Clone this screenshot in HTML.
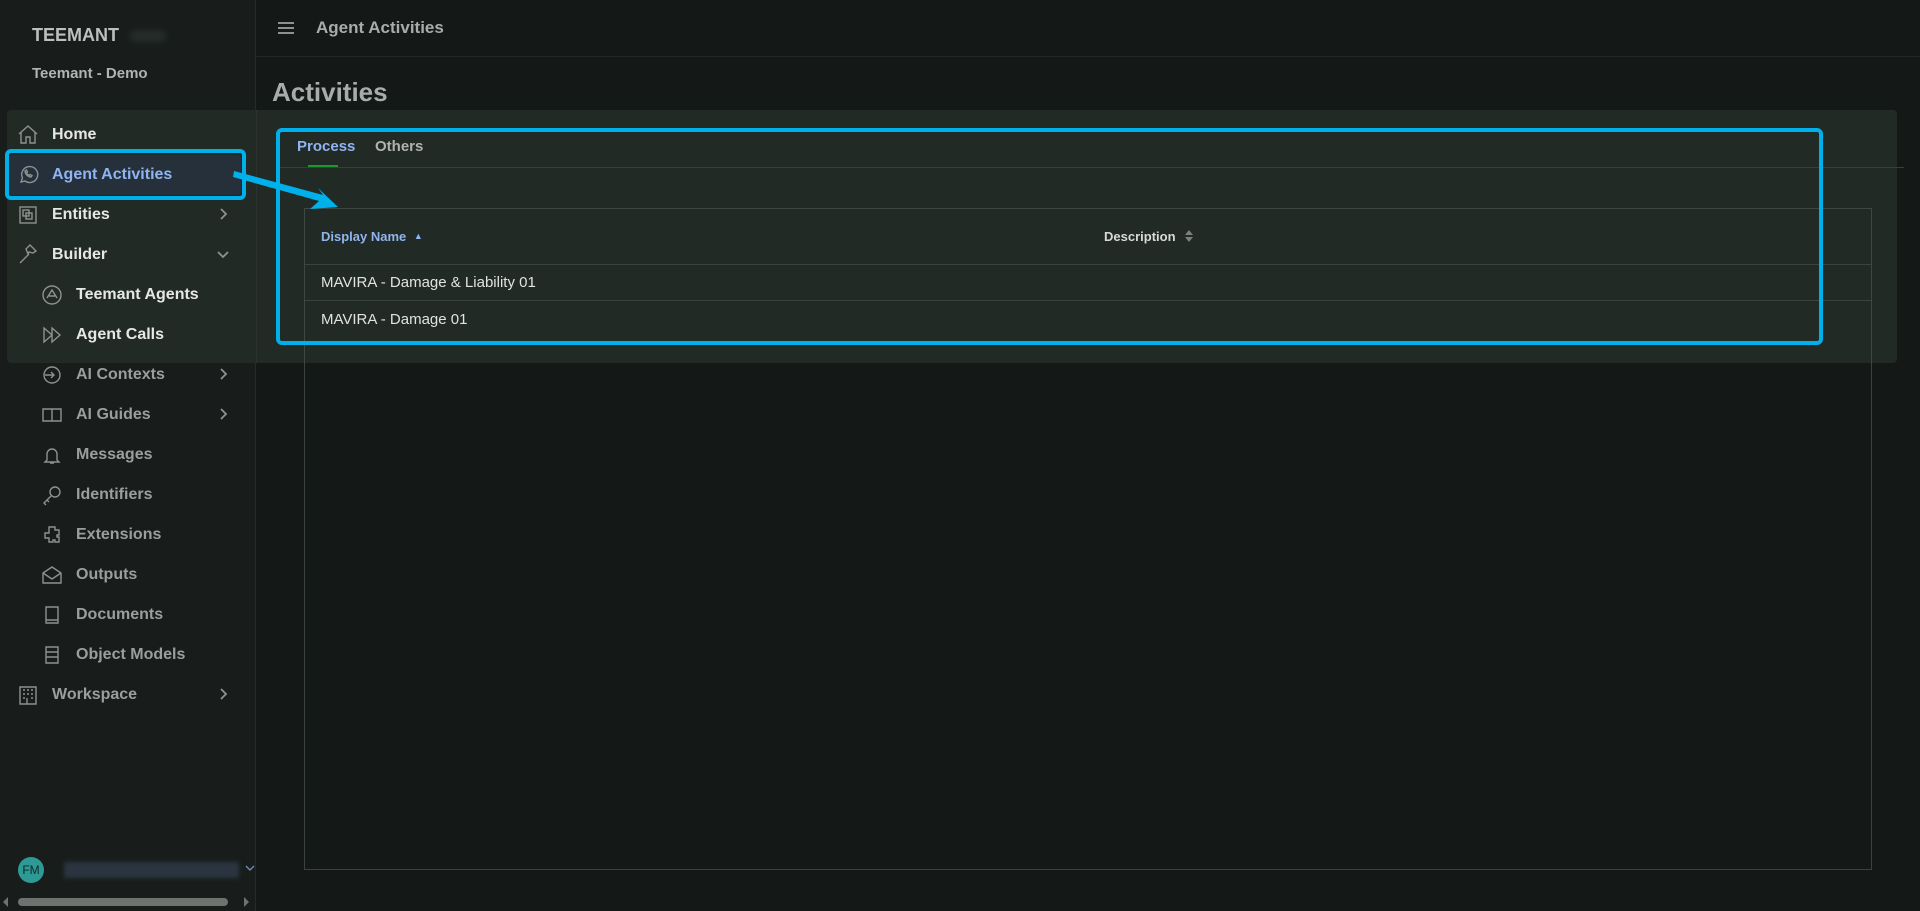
<!DOCTYPE html>
<html><head><meta charset="utf-8"><style>
*{box-sizing:border-box;margin:0;padding:0}
body{width:1920px;height:911px;overflow:hidden;background:#141917;font-family:"Liberation Sans",sans-serif;position:relative;color:#c9ccca}
.sb{position:absolute;left:0;top:0;width:256px;height:911px;background:#181d1b;border-right:1px solid #252b28}
.abs{position:absolute}
.nav{position:absolute;font-size:16px;font-weight:bold;color:#9a9e9c}
.hl{color:#e6e8e7}
svg{position:absolute;fill:none;stroke:#8d9290;stroke-width:1.4}
svg.ch{left:217px;stroke-width:1.8}
</style></head><body>
<div class="sb"></div>
<div class="abs" style="left:256px;top:56px;width:1664px;height:1px;background:#232926"></div>
<div class="abs" style="left:32px;top:25px;font-size:18px;font-weight:bold;color:#bcc0be">TEEMANT</div>
<div class="abs" style="left:130px;top:30px;width:36px;height:12px;background:#262c29;border-radius:6px;filter:blur(3px)"></div>
<div class="abs" style="left:32px;top:65px;font-size:15px;font-weight:bold;color:#b0b4b2">Teemant - Demo</div>
<div class="abs" style="left:278px;top:22px;width:16px;height:2px;background:#8d9290;box-shadow:0 5px 0 #8d9290,0 10px 0 #8d9290"></div>
<div class="abs" style="left:316px;top:18px;font-size:17px;font-weight:bold;color:#a8acaa">Agent Activities</div>
<div class="abs" style="left:272px;top:77px;font-size:26px;font-weight:bold;color:#a8acaa">Activities</div>

<div class="abs" style="left:304px;top:208px;width:1568px;height:662px;border:1px solid #3a423f"></div>

<div class="abs" style="left:7px;top:110px;width:1890px;height:253px;background:#222a25;border-radius:4px"></div>
<div class="abs" style="left:256px;top:110px;width:1px;height:253px;background:#2c3330"></div>
<div class="abs" style="left:276px;top:167px;width:1628px;height:1px;background:#364039"></div>
<div class="abs" style="left:304px;top:208px;width:1568px;height:156px;border:1px solid #3e4744;border-bottom:none"></div>
<div class="abs" style="left:305px;top:264px;width:1566px;height:1px;background:#3a4340"></div>
<div class="abs" style="left:305px;top:300px;width:1566px;height:1px;background:#3a4340"></div>
<div class="abs" style="left:297px;top:138px;font-size:15px;font-weight:bold;color:#8fb4f0">Process</div>
<div class="abs" style="left:308px;top:165px;width:30px;height:2px;background:#1a9a2a"></div>
<div class="abs" style="left:375px;top:138px;font-size:15px;font-weight:bold;color:#aeb2b0">Others</div>
<div class="abs" style="left:321px;top:229px;font-size:13px;font-weight:bold;color:#8fb4f0">Display Name <span style="font-size:9px;position:relative;top:-2px;margin-left:4px">▲</span></div>
<div class="abs" style="left:1104px;top:229px;font-size:13px;font-weight:bold;color:#d6dad8">Description</div>
<svg style="left:1185px;top:230px;stroke:none;fill:#7a807d" width="8" height="12" viewBox="0 0 8 12"><path d="M0 5L4 0 8 5zM0 7h8l-4 5z"/></svg>
<div class="abs" style="left:321px;top:274px;font-size:15px;color:#e0e3e1">MAVIRA - Damage &amp; Liability 01</div>
<div class="abs" style="left:321px;top:311px;font-size:15px;color:#e0e3e1">MAVIRA - Damage 01</div>
<div class="abs" style="left:276px;top:128px;width:1547px;height:217px;border:4px solid #00b0ea;border-radius:6px"></div>

<div class="abs" style="left:9px;top:155px;width:232px;height:40px;background:#25303a;border-radius:4px"></div>
<div class="abs" style="left:5px;top:149px;width:241px;height:51px;border:4px solid #00b0ea;border-radius:6px"></div>
<svg style="left:17px;top:123px" width="22" height="22" viewBox="0 0 22 22"><path d="M2 11L11 3l9 8M4 9v11h5v-6h4v6h5V9"/></svg>
<div class="nav hl" style="left:52px;top:126px">Home</div>
<svg style="left:17px;top:163px" width="22" height="22" viewBox="0 0 22 22"><path d="M4 19l1.5-4A8 8 0 1 1 8 18z M8 8c0 3 3 6 6 6l1-1.5-2-1-1 1c-1-.5-2-1.5-2.5-2.5l1-1-1-2z"/></svg>
<div class="nav" style="left:52px;top:166px;color:#8fb4f0">Agent Activities</div>
<svg style="left:17px;top:204px" width="22" height="22" viewBox="0 0 22 22"><rect x="3" y="3" width="16" height="16"/><rect x="6" y="6" width="6" height="6"/><rect x="9" y="9" width="6" height="6"/></svg>
<div class="nav hl" style="left:52px;top:206px">Entities</div>
<svg class="ch" style="top:208px" width="12" height="12" viewBox="0 0 12 12"><path d="M4 1l5 5-5 5"/></svg>
<svg style="left:17px;top:243px" width="22" height="22" viewBox="0 0 22 22"><path d="M3 20l9-9M9 6l4-4 6 6-3 2-4-1-1 2z"/></svg>
<div class="nav hl" style="left:52px;top:246px">Builder</div>
<svg class="ch" style="top:248px" width="12" height="12" viewBox="0 0 12 12"><path d="M1 4l5 5 5-5"/></svg>
<svg style="left:41px;top:284px" width="22" height="22" viewBox="0 0 22 22"><circle cx="11" cy="11" r="9"/><path d="M6 14l5-8 5 8M8 12h6"/></svg>
<div class="nav hl" style="left:76px;top:286px">Teemant Agents</div>
<svg style="left:41px;top:324px" width="22" height="22" viewBox="0 0 22 22"><path d="M3 4v14l8-7zM11 4v14l8-7z"/></svg>
<div class="nav hl" style="left:76px;top:326px">Agent Calls</div>
<svg style="left:41px;top:364px" width="22" height="22" viewBox="0 0 22 22"><circle cx="11" cy="11" r="8"/><path d="M4 11h9M10 8l3 3-3 3"/></svg>
<div class="nav" style="left:76px;top:366px">AI Contexts</div>
<svg class="ch" style="top:368px" width="12" height="12" viewBox="0 0 12 12"><path d="M4 1l5 5-5 5"/></svg>
<svg style="left:41px;top:404px" width="22" height="22" viewBox="0 0 22 22"><path d="M2 5h18v12H2zM11 5v12"/></svg>
<div class="nav" style="left:76px;top:406px">AI Guides</div>
<svg class="ch" style="top:408px" width="12" height="12" viewBox="0 0 12 12"><path d="M4 1l5 5-5 5"/></svg>
<svg style="left:41px;top:444px" width="22" height="22" viewBox="0 0 22 22"><path d="M6 16V10a5 5 0 0 1 10 0v6l2 2H4zM9 19h4"/></svg>
<div class="nav" style="left:76px;top:446px">Messages</div>
<svg style="left:41px;top:484px" width="22" height="22" viewBox="0 0 22 22"><circle cx="14" cy="8" r="5"/><path d="M10 12l-7 7 2 2M6 16l2 2"/></svg>
<div class="nav" style="left:76px;top:486px">Identifiers</div>
<svg style="left:41px;top:524px" width="22" height="22" viewBox="0 0 22 22"><path d="M8 3h6v3h4v5h-2v2h2v5h-4v-2h-2v2H8v-4H4V9h4z"/></svg>
<div class="nav" style="left:76px;top:526px">Extensions</div>
<svg style="left:41px;top:564px" width="22" height="22" viewBox="0 0 22 22"><path d="M2 9l9-6 9 6v10H2zM2 9l9 6 9-6"/></svg>
<div class="nav" style="left:76px;top:566px">Outputs</div>
<svg style="left:41px;top:604px" width="22" height="22" viewBox="0 0 22 22"><path d="M5 3h12v16H5zM5 16h12"/></svg>
<div class="nav" style="left:76px;top:606px">Documents</div>
<svg style="left:41px;top:644px" width="22" height="22" viewBox="0 0 22 22"><path d="M5 3h12v16H5zM5 8h12M5 13h12"/></svg>
<div class="nav" style="left:76px;top:646px">Object Models</div>
<svg style="left:17px;top:684px" width="22" height="22" viewBox="0 0 22 22"><path d="M3 3h16v17H3zM6 6h2M10 6h2M14 6h2M6 10h2M10 10h2M14 10h2M6 14h2M14 14h2M10 14v6"/></svg>
<div class="nav" style="left:52px;top:686px">Workspace</div>
<svg class="ch" style="top:688px" width="12" height="12" viewBox="0 0 12 12"><path d="M4 1l5 5-5 5"/></svg>

<svg style="left:230px;top:150px;stroke:none;fill:#00b0ea" width="120" height="70" viewBox="0 0 120 70"><path d="M4 21L93 45 88 38 108 57 80 59 89 51 3 27z"/></svg>

<div class="abs" style="left:18px;top:857px;width:26px;height:26px;border-radius:50%;background:#2e9a96;color:#0f2a28;font-size:12px;text-align:center;line-height:26px">FM</div>
<div class="abs" style="left:64px;top:862px;width:175px;height:16px;background:#2a3540;filter:blur(2px)"></div>
<svg style="left:245px;top:864px;stroke:#6b8bb0" width="10" height="8" viewBox="0 0 10 8"><path d="M1 2l4 4 4-4"/></svg>
<div class="abs" style="left:18px;top:898px;width:210px;height:8px;border-radius:4px;background:#6e7370"></div>
<div class="abs" style="left:3px;top:897px;width:0;height:0;border:5px solid transparent;border-right-color:#6e7370;border-left:none"></div>
<div class="abs" style="left:244px;top:897px;width:0;height:0;border:5px solid transparent;border-left-color:#6e7370;border-right:none"></div>
</body></html>
